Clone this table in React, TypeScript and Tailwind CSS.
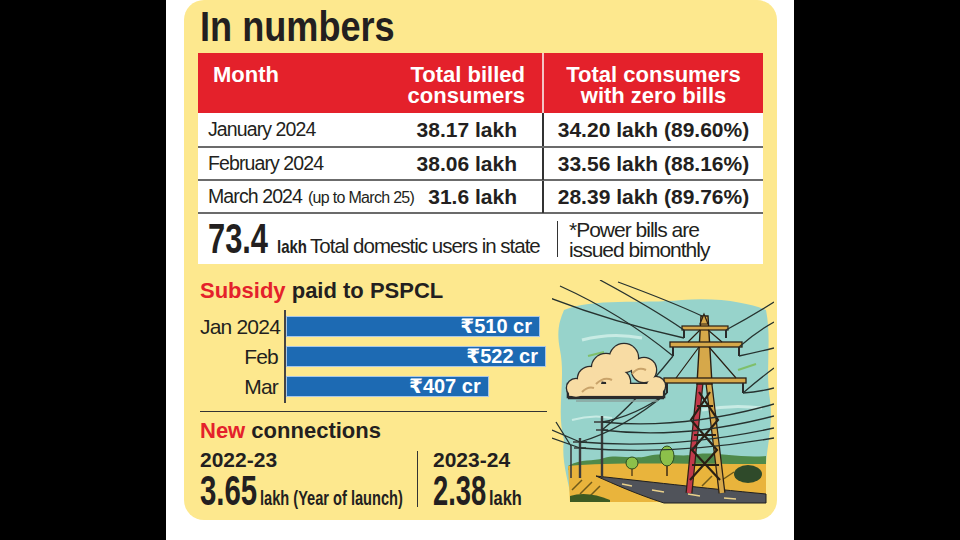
import React from 'react'

const sans = "font-['Liberation_Sans','DejaVu_Sans',sans-serif]"

const rows = [
  { month: 'January 2024', note: '', billed: '38.17 lakh', zero: '34.20 lakh (89.60%)' },
  { month: 'February 2024', note: '', billed: '38.06 lakh', zero: '33.56 lakh (88.16%)' },
  { month: 'March 2024', note: '(up to March 25)', billed: '31.6 lakh', zero: '28.39 lakh (89.76%)' },
]

const subsidy = [
  { label: 'Jan 2024', value: 510 },
  { label: 'Feb', value: 522 },
  { label: 'Mar', value: 407 },
]

function PylonScene() {
  const puffs: [number, number, number][] = [
    [24, 108, 9],
    [38, 99, 12],
    [54, 88, 14],
    [72, 78, 14],
    [92, 90, 12],
    [104, 106, 9],
    [66, 102, 12],
  ]
  return (
    <svg width="222" height="230" viewBox="0 0 222 230" className="block">
      {/* sky */}
      <path
        d="M12 30 C40 18 90 24 130 20 C170 17 200 24 214 30 C220 60 213 90 218 120 C222 150 212 172 214 200 L212 222 L20 222 C16 200 9 180 12 160 C4 130 14 100 8 70 C4 50 8 40 12 30 Z"
        fill="#97d3cb"
      />
      <path d="M30 60 Q60 52 90 58" stroke="#c8ebe4" strokeWidth="3" fill="none" />
      <path d="M150 130 Q180 124 210 128" stroke="#c8ebe4" strokeWidth="3" fill="none" />
      <path d="M20 140 Q40 134 60 138" stroke="#c8ebe4" strokeWidth="2" fill="none" />
      <path d="M186 90 L204 84" stroke="#7fbf6a" strokeWidth="2" />
      <path d="M36 76 L52 72" stroke="#7fbf6a" strokeWidth="2" />

      {/* horizon hedge */}
      <path
        d="M16 186 C30 178 40 182 52 178 C66 174 80 180 96 176 C112 172 128 178 146 174 C166 172 186 178 214 176 L214 190 L16 190 Z"
        fill="#4f8a4a"
      />
      {/* field */}
      <path d="M16 186 C60 182 120 184 214 184 L214 222 L18 222 Z" fill="#e9b43c" />
      <path d="M20 210 L30 200 M28 214 L40 202 M36 218 L48 206 M150 206 L160 196 M170 200 L182 192" stroke="#6f5a1a" strokeWidth="1.5" />
      <path d="M18 216 C30 212 44 214 58 220 L58 222 L18 222 Z" fill="#3d5a22" />

      {/* road */}
      <path d="M44 196 C90 201 150 208 214 214 L214 223 L112 223 C84 214 62 204 44 196 Z" fill="#50535a" stroke="#1f1f1f" strokeWidth="1" />
      <path d="M70 204 L80 206 M100 210 L112 212 M136 214 L148 216 M172 218 L184 219" stroke="#e8d08a" strokeWidth="1.6" />

      {/* trees */}
      <path d="M115 182 L115 196" stroke="#3b2a15" strokeWidth="1.5" />
      <ellipse cx="115" cy="176" rx="7" ry="10" fill="#8cc04a" stroke="#2b4a1f" strokeWidth="1" />
      <path d="M80 186 L80 196" stroke="#3b2a15" strokeWidth="1.2" />
      <ellipse cx="80" cy="183" rx="6" ry="6" fill="#8cc04a" stroke="#2b4a1f" strokeWidth="1" />
      <ellipse cx="196" cy="194" rx="14" ry="9" fill="#2f4a2a" />

      {/* small poles */}
      <g stroke="#3b3b3b" strokeWidth="2.4">
        <path d="M50 136 L50 198" />
        <path d="M42 142 L58 142 M44 150 L56 150" strokeWidth="1.6" />
        <path d="M28 158 L28 198" />
        <path d="M21 162 L35 162 M22 168 L34 168" strokeWidth="1.4" />
        <path d="M19 166 L19 198" strokeWidth="1.6" />
      </g>

      {/* pylon */}
      <g>
        <path d="M148 104 L137 213" stroke="#2a1f14" strokeWidth="7" />
        <path d="M148 104 L137 213" stroke="#c23a4a" strokeWidth="4.5" />
        <path d="M157 104 L170 213" stroke="#2a1f14" strokeWidth="7" />
        <path d="M157 104 L170 213" stroke="#d6a84a" strokeWidth="4.5" />
        <path
          d="M147 112 L166 140 L140 170 L168 200 M158 112 L139 140 L165 170 L138 200 M145 126 L161 126 M142 155 L164 155 M140 185 L167 185"
          stroke="#2a1f14"
          strokeWidth="2.2"
          fill="none"
        />
        <path d="M149 36 L156 36 L160 104 L145 104 Z" fill="#d6a84a" stroke="#2a1f14" strokeWidth="1.4" />
        <path d="M152 34 L148 44 L156 44 Z" fill="#d6a84a" stroke="#2a1f14" strokeWidth="1.2" />
        <rect x="130" y="46" width="46" height="4" fill="#d6a84a" stroke="#2a1f14" strokeWidth="1.2" />
        <rect x="118" y="62" width="72" height="5" fill="#d6a84a" stroke="#2a1f14" strokeWidth="1.3" />
        <rect x="112" y="98" width="82" height="5" fill="#d6a84a" stroke="#2a1f14" strokeWidth="1.3" />
        <path d="M148 50 L136 62 M156 50 L170 62 M147 67 L124 98 M157 67 L184 98" stroke="#2a1f14" strokeWidth="1.2" />
        <g stroke="#2a2a2a" strokeWidth="2">
          <path d="M132 50 L132 58 M174 50 L174 58 M121 67 L121 76 M187 67 L187 76 M115 103 L115 113 M191 103 L191 113" />
        </g>
      </g>

      {/* wires */}
      <g stroke="#26322f" strokeWidth="1.3" fill="none">
        <path d="M-2 18 Q60 42 132 58" />
        <path d="M8 6 Q70 34 121 76" />
        <path d="M48 0 Q100 28 132 50" />
        <path d="M66 2 Q120 22 150 36" />
        <path d="M174 50 Q200 36 222 22" />
        <path d="M187 67 Q204 52 222 42" />
        <path d="M187 76 Q206 72 222 68" />
        <path d="M191 113 Q206 100 222 88" />
        <path d="M191 113 Q206 112 222 108" />
        <path d="M115 113 Q84 136 50 142" />
        <path d="M121 76 Q84 122 50 150" />
        <path d="M115 113 Q70 150 28 162" />
        <path d="M50 142 Q130 150 222 124" />
        <path d="M50 150 Q130 160 222 136" />
        <path d="M28 162 Q120 170 222 148" />
        <path d="M28 168 Q120 176 222 158" />
        <path d="M0 150 L28 162 M0 158 L28 168 M4 142 L19 166" />
      </g>

      {/* cloud */}
      <g>
        {puffs.map(([cx, cy, r], i) => (
          <circle key={`o${i}`} cx={cx} cy={cy} r={r} fill="#f8dca4" stroke="#2b2b2b" strokeWidth="2.6" />
        ))}
        <rect x="16" y="104" width="96" height="13" fill="#f8dca4" stroke="#2b2b2b" strokeWidth="2.6" />
        {puffs.map(([cx, cy, r], i) => (
          <circle key={`i${i}`} cx={cx} cy={cy} r={r} fill="#f8dca4" />
        ))}
        <rect x="17.3" y="104" width="93.4" height="11.7" fill="#f8dca4" />
        <path d="M44 104 Q52 96 60 100 M80 94 Q86 86 94 90 M30 112 Q36 106 42 108" stroke="#c9a36a" strokeWidth="2" fill="none" />
        <path d="M16 118 L112 118" stroke="#2b2b2b" strokeWidth="2.4" />
        <path d="M24 121 L106 121" stroke="#8aa39e" strokeWidth="1.6" />
      </g>
    </svg>
  )
}

export default function App() {
  return (
    <div className={`${sans} w-[960px] h-[540px] bg-black flex justify-center overflow-hidden`}>
      <div className="w-[628px] h-full bg-white pl-[18px]">
        <div className="w-[593px] h-[520px] bg-[#fde88e] rounded-[20px] flex flex-col text-[#231f20]">
          <h1 className="font-bold text-[42px] leading-none pl-[16px] pt-[6px] h-[53px] whitespace-nowrap">
            <span className="inline-block origin-left scale-x-[0.86]">In numbers</span>
          </h1>

          <div className="mx-[14px] bg-white">
            <div className="h-[60px] bg-[#e4212b] grid grid-cols-[344px_1fr] text-white font-bold text-[22px] leading-[21px]">
              <div className="flex justify-between pl-[15px] pr-[17px] pt-[11px]">
                <span>Month</span>
                <span className="text-right">
                  Total billed
                  <br />
                  consumers
                </span>
              </div>
              <div className="border-l-2 border-[#f4c4c4] text-center pt-[11px]">
                Total consumers
                <br />
                with zero bills
              </div>
            </div>

            {rows.map((r, i) => (
              <div
                key={r.month}
                className={`grid grid-cols-[344px_1fr] h-[33px] ${i > 0 ? 'border-t-2 border-[#6b6b6b]' : ''}`}
              >
                <div className="flex items-center justify-between pl-[10px] pr-[25px] whitespace-nowrap">
                  <span className="text-[19.5px] tracking-[-0.9px]">
                    {r.month}
                    {r.note && <span className="text-[16px] ml-[6px] tracking-[-0.7px]">{r.note}</span>}
                  </span>
                  <span className="font-bold text-[21px]">{r.billed}</span>
                </div>
                <div className="font-bold text-[21px] border-l-2 border-[#333] flex items-center justify-center whitespace-nowrap">
                  {r.zero}
                </div>
              </div>
            ))}

            <div className="h-[52px] border-t-2 border-[#6b6b6b] flex items-center">
              <div className="flex items-baseline pl-[10px] w-[359px] whitespace-nowrap pt-[2px]">
                <span className="inline-block origin-left scale-x-[0.734] -mr-[21.7px] font-bold text-[42px] leading-none">73.4</span>
                <span className="inline-block origin-left scale-x-[0.79] -mr-[8px] ml-[9px] font-bold text-[19px]">lakh</span>
                <span className="text-[20.5px] ml-[3px] tracking-[-1px]">Total domestic users in state</span>
              </div>
              <div className="border-l-[1.5px] border-[#333] h-[36px]" />
              <div className="pl-[11px] text-[21px] leading-[20px] tracking-[-1px] whitespace-nowrap pt-[2px]">
                *Power bills are
                <br />
                issued bimonthly
              </div>
            </div>
          </div>

          <div className="flex">
            <div className="w-[363px] pl-[16px]">
              <h2 className="font-bold text-[22px] leading-none mt-[16px]">
                <span className="text-[#e4212b]">Subsidy</span> paid to PSPCL
              </h2>
              <div className="grid grid-cols-[84px_1fr] mt-[8px]">
                <div className="flex flex-col text-right pr-[6px] text-[21px] tracking-[-0.8px] pt-[6px] gap-[9px] whitespace-nowrap">
                  {subsidy.map(s => (
                    <div key={s.label} className="h-[21px] leading-[21px]">{s.label}</div>
                  ))}
                </div>
                <div className="border-l-2 border-[#444] flex flex-col gap-[9px] py-[6px]">
                  {subsidy.map(s => (
                    <div
                      key={s.label}
                      className="h-[21px] bg-[#1d6ab3] border border-[#a9c6e6] text-white font-bold text-[20px] leading-[19px] text-right pr-[7px] whitespace-nowrap"
                      style={{ width: `${(s.value / 522) * 260}px` }}
                    >
                      ₹{s.value} cr
                    </div>
                  ))}
                </div>
              </div>
              <div className="border-t-[1.5px] border-[#333] mt-[8px]" />
              <h2 className="font-bold text-[22px] leading-none mt-[8px]">
                <span className="text-[#e4212b]">New</span> connections
              </h2>
              <div className="flex mt-[7px]">
                <div className="w-[217px]">
                  <div className="font-bold text-[21px] leading-[21px]">2022-23</div>
                  <div className="font-bold flex items-baseline whitespace-nowrap">
                    <span className="inline-block origin-left scale-x-[0.70] -mr-[24.5px] text-[42px] leading-none">3.65</span>
                    <span className="inline-block origin-left scale-x-[0.73] ml-[3px] text-[20px]">lakh (Year of launch)</span>
                  </div>
                </div>
                <div className="border-l-[1.5px] border-[#333] h-[56px] mt-[2px]" />
                <div className="pl-[15px]">
                  <div className="font-bold text-[21px] leading-[21px]">2023-24</div>
                  <div className="font-bold flex items-baseline whitespace-nowrap">
                    <span className="inline-block origin-left scale-x-[0.65] -mr-[28.6px] text-[42px] leading-none">2.38</span>
                    <span className="inline-block origin-left scale-x-[0.82] ml-[3px] text-[20px]">lakh</span>
                  </div>
                </div>
              </div>
            </div>
            <div className="ml-[5px] mt-[16px]">
              <PylonScene />
            </div>
          </div>
        </div>
      </div>
    </div>
  )
}
